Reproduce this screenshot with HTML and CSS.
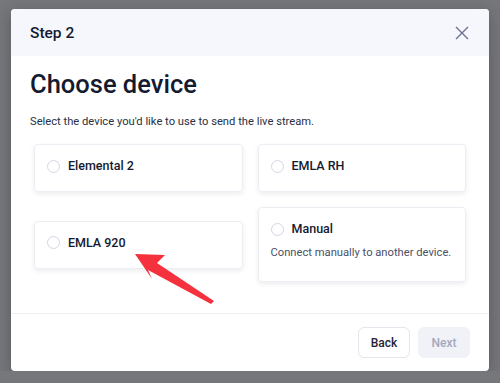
FILE: index.html
```html
<!DOCTYPE html>
<html lang="en">
<head>
    <meta charset="UTF-8">
    <title>Choose device</title>
    <link rel="stylesheet" href="styles.css">
</head>
<body>
    <div class="modal">
        <!-- header -->
        <div class="modal-head">
            <span class="step">Step 2</span>
            <svg class="close" width="14" height="14" viewBox="0 0 14 14">
                <path d="M1 1L13 13M13 1L1 13" stroke="#6b7290" stroke-width="1.4" fill="none"/>
            </svg>
        </div>
        <!-- body -->
        <div class="modal-body">
            <h1 class="title">Choose device</h1>
            <p class="desc">Select the device you'd like to use to send the live stream.</p>
            <div class="devices">
                <div class="card">
                    <div class="row"><span class="radio"></span><span class="name">Elemental 2</span></div>
                </div>
                <div class="card">
                    <div class="row"><span class="radio"></span><span class="name">EMLA RH</span></div>
                </div>
                <div class="card">
                    <div class="row"><span class="radio"></span><span class="name">EMLA 920</span></div>
                </div>
                <div class="card tall">
                    <div class="row"><span class="radio"></span><span class="name">Manual</span></div>
                    <p class="hint">Connect manually to another device.</p>
                </div>
            </div>
        </div>
        <!-- footer -->
        <div class="modal-foot">
            <button class="btn back">Back</button>
            <button class="btn next">Next</button>
        </div>
        <!-- annotation arrow -->
        <svg class="arrow" width="90" height="60" viewBox="0 0 90 60">
            <polygon points="0,0 30,1 22,9 79,47 76,50 13,16 17,25" fill="#f4313d"/>
        </svg>
    </div>
</body>
</html>
```

FILE: styles.css
```css
* {
    margin: 0;
    padding: 0;
    box-sizing: border-box;
}
body {
    background-color: #76777b;
    font-family: Roboto, "Noto Sans", sans-serif;
    color: #141a30;
    padding: 9px 11px 0;
}
.modal {
    position: relative;
    width: 478px;
    height: 362px;
    background-color: #fff;
    border-radius: 4px;
    box-shadow: 0 4px 16px rgba(0, 0, 0, 0.25);
    overflow: hidden;
    display: flex;
    flex-direction: column;
}
.modal-head {
    height: 47px;
    background-color: #f6f7fc;
    display: flex;
    align-items: center;
    justify-content: space-between;
    padding: 0 20px 0 19px;
}
.step {
    font-size: 15.5px;
    font-weight: 500;
}
.close {
    display: block;
}
.modal-body {
    flex: 1;
    padding: 13px 20px 0 19px;
}
.title {
    font-size: 25.5px;
    font-weight: 500;
    line-height: 30px;
}
.desc {
    font-size: 11.2px;
    line-height: 16px;
    margin-top: 15px;
    color: #2a3045;
}
.devices {
    display: grid;
    grid-template-columns: 1fr 1fr;
    column-gap: 15px;
    row-gap: 15px;
    align-items: center;
    margin: 14px 3px 0 4px;
}
.card {
    height: 48px;
    border: 1px solid #eceef4;
    border-radius: 4px;
    box-shadow: 0 2px 5px rgba(20, 30, 60, 0.08);
    padding: 13px 12px;
}
.card.tall {
    height: 75px;
}
.row {
    display: flex;
    align-items: center;
    gap: 8px;
}
.radio {
    width: 13px;
    height: 13px;
    border: 1.3px solid #d3d6e4;
    border-radius: 50%;
}
.name {
    font-size: 12.5px;
    font-weight: 500;
    line-height: 16px;
}
.hint {
    font-size: 11.2px;
    color: #4a5068;
    margin-top: 9px;
}
.modal-foot {
    height: 58px;
    border-top: 1px solid #eef0f4;
    display: flex;
    justify-content: flex-end;
    align-items: flex-start;
    gap: 8px;
    padding: 13px 19px 0;
}
.btn {
    height: 31px;
    width: 52px;
    border-radius: 6px;
    font-family: Roboto, "Noto Sans", sans-serif;
    font-size: 12px;
    font-weight: 500;
}
.back {
    background-color: #fff;
    border: 1px solid #e4e6ee;
    color: #1f2538;
}
.next {
    background-color: #f1f2f7;
    border: 1px solid #f1f2f7;
    color: #a3a8bd;
}
.arrow {
    position: absolute;
    left: 124px;
    top: 245px;
}
```
